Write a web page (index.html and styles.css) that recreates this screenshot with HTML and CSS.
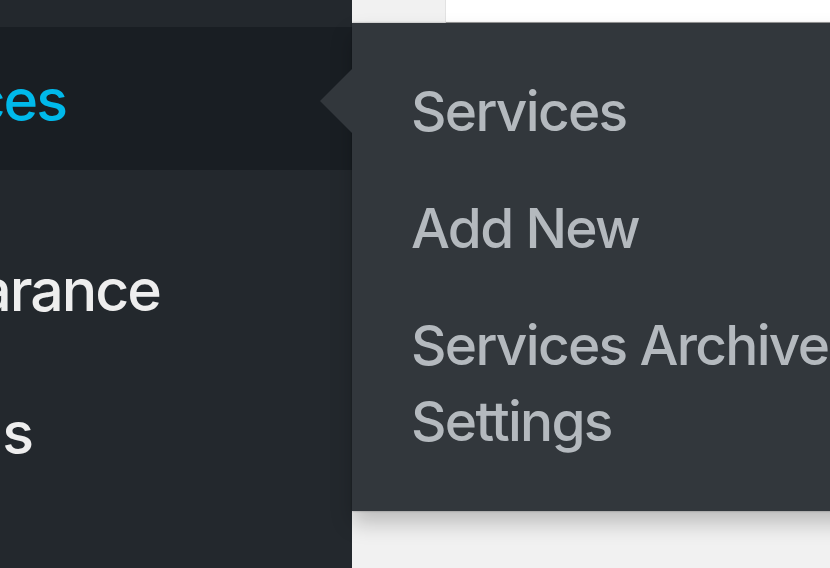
FILE: index.html
```html
<!DOCTYPE html>
<html lang="en">
<head>
  <meta charset="UTF-8">
  <meta name="viewport" content="width=device-width, initial-scale=1.0">
  <title>Services menu</title>
  <link rel="stylesheet" href="styles.css">
</head>
<body>
  <!-- admin sidebar -->
  <nav class="sidebar">
    <ul class="menu">
      <li class="menu-gap"></li>
      <li class="menu-item current">
        <a class="menu-label label-services" href="#">Services</a>
      </li>
      <li class="menu-separator"></li>
      <li class="menu-item">
        <a class="menu-label label-appearance" href="#">Appearance</a>
      </li>
      <li class="menu-item">
        <a class="menu-label label-plugins" href="#">Plugins</a>
      </li>
    </ul>
  </nav>

  <!-- page content with the open flyout -->
  <main class="content">
    <div class="topbar">
      <div class="topbar-side"></div>
      <div class="topbar-box"></div>
    </div>

    <div class="flyout">
      <span class="flyout-arrow"></span>
      <ul class="submenu">
        <li><a href="#">Services</a></li>
        <li><a href="#">Add New</a></li>
        <li><a href="#">Services Archive Settings</a></li>
      </ul>
    </div>
  </main>
</body>
</html>
```

FILE: styles.css
```css
html, body {
  height: 100%;
}

body {
  margin: 0;
  display: flex;
  overflow: hidden;
  background-color: #f1f1f1;
  font-family: Inter, "Noto Sans", Arial, sans-serif;
}

ul {
  list-style: none;
  margin: 0;
  padding: 0;
}

a {
  text-decoration: none;
}

/* sidebar */
.sidebar {
  width: 352px;
  flex-shrink: 0;
  background-color: #23282d;
}

.menu-gap {
  height: 27px;
}

.menu-item {
  height: 143px;
  display: flex;
  align-items: center;
}

.menu-item.current {
  background-color: #191e23;
}

.menu-separator {
  height: 47px;
}

.menu-label {
  display: flex;
  justify-content: flex-end;
  overflow: hidden;
  white-space: nowrap;
  font-size: 59px;
  font-weight: 500;
  letter-spacing: -2px;
  line-height: 76px;
  color: #eeeeee;
  padding-top: 2px;
}

.current .menu-label {
  color: #00b9eb;
}

.label-services {
  width: 66px;
}

.label-appearance {
  width: 160px;
}

.label-plugins {
  width: 32px;
}

/* content */
.content {
  flex: 1;
  min-width: 0;
}

.topbar {
  height: 23px;
  display: flex;
}

.topbar-side {
  width: 93px;
  border-right: 1px solid #e2e2e2;
}

.topbar-box {
  flex: 1;
  background-color: #ffffff;
  border-bottom: 1px solid #a8a8a8;
}

.flyout {
  position: relative;
  width: 672px;
  height: 488px;
  box-sizing: border-box;
  padding: 29px 0 32px;
  background-color: #32373c;
  box-shadow: 0 12px 20px rgba(0, 0, 0, 0.22), 0 0 2px rgba(0, 0, 0, 0.35);
}

.flyout-arrow {
  position: absolute;
  left: -32px;
  top: 46px;
  border-style: solid;
  border-width: 32px 32px 32px 0;
  border-color: transparent #32373c transparent transparent;
}

.submenu a {
  display: block;
  padding: 21px 50px 20px 59px;
  font-size: 55px;
  font-weight: 500;
  letter-spacing: -1.7px;
  line-height: 76px;
  color: #b4b9be;
}
```
